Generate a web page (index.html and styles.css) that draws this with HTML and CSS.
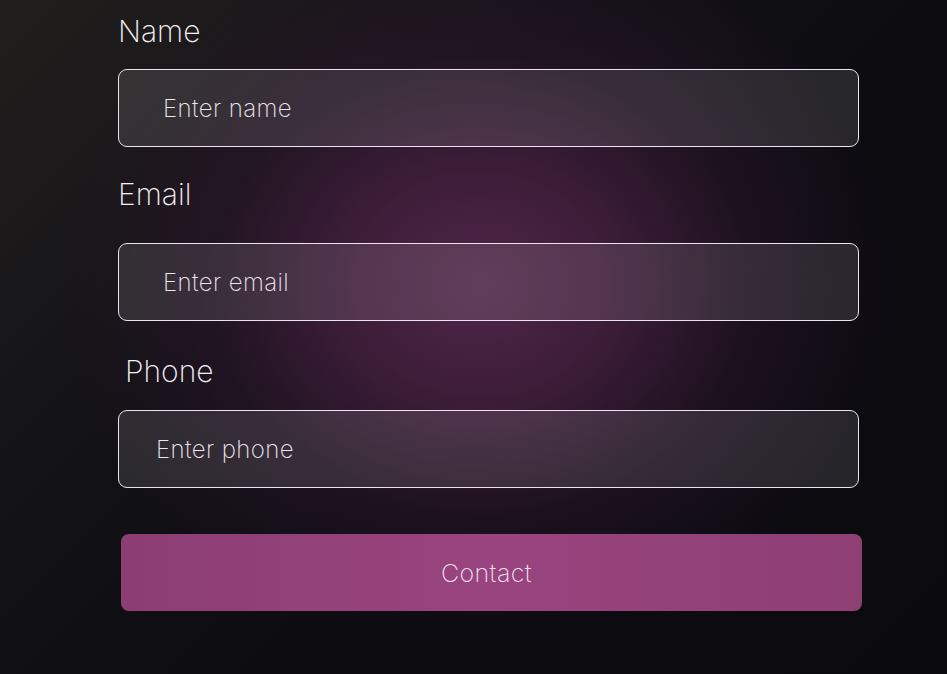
FILE: index.html
```html
<!DOCTYPE html>
<html lang="en">
<head>
<meta charset="utf-8">
<title>Contact</title>
<link rel="stylesheet" href="styles.css">
</head>
<body>
<main class="page">
  <form class="form">
    <label class="label label-name" for="name">Name</label>
    <input class="field field-name" id="name" type="text" placeholder="Enter name">
    <label class="label label-email" for="email">Email</label>
    <input class="field field-email" id="email" type="email" placeholder="Enter email">
    <label class="label label-phone" for="phone">Phone</label>
    <input class="field field-phone" id="phone" type="tel" placeholder="Enter phone">
    <button class="submit" type="button">Contact</button>
  </form>
</main>
</body>
</html>
```
FILE: styles.css
```css
html, body {
  margin: 0;
  padding: 0;
  height: 100%;
}
body {
  font-family: Inter, "Noto Sans", sans-serif;
  font-weight: 200;
  color: #f2eef2;
  background:
    radial-gradient(ellipse 420px 360px at 480px 285px, #4f2649 0%, rgba(70, 32, 64, 0.85) 30%, rgba(45, 22, 44, 0.5) 65%, rgba(20, 14, 22, 0) 100%),
    linear-gradient(135deg, #211f1d 0%, #121116 35%, #0b0b10 65%, #0a0a0f 100%);
  overflow: hidden;
}
.page {
  padding: 13px 0 0 118px;
}
.form {
  display: flex;
  flex-direction: column;
  width: 741px;
}
.label {
  display: block;
  font-size: 30px;
  line-height: 36px;
  font-weight: 200;
  color: #f4f0f4;
}
.label-name { margin-bottom: 20px; }
.label-email { margin-top: 29px; margin-bottom: 31px; }
.label-phone { margin-top: 32px; margin-bottom: 21px; padding-left: 7px; }
.field {
  box-sizing: border-box;
  height: 78px;
  width: 741px;
  border: 1px solid #ebe2f2;
  border-radius: 9px;
  background: rgba(255, 255, 255, 0.11);
  font-family: Inter, "Noto Sans", sans-serif;
  font-weight: 200;
  font-size: 24px;
  letter-spacing: 0.4px;
  color: #ece6ee;
  padding: 0 0 0 44px;
  outline: none;
}
.field::placeholder {
  color: #ece4ee;
  opacity: 1;
}
.field-phone { padding-left: 37px; }
.submit {
  box-sizing: border-box;
  margin: 46px 0 0 3px;
  height: 77px;
  width: 741px;
  border: none;
  border-radius: 8px;
  padding: 0 10px 0 0;
  background: linear-gradient(90deg, #8c3e73 0%, #99447f 50%, #8e3f74 100%);
  color: #f0e0ee;
  font-family: Inter, "Noto Sans", sans-serif;
  font-weight: 200;
  font-size: 25px;
  letter-spacing: 0.4px;
  cursor: pointer;
}
```
